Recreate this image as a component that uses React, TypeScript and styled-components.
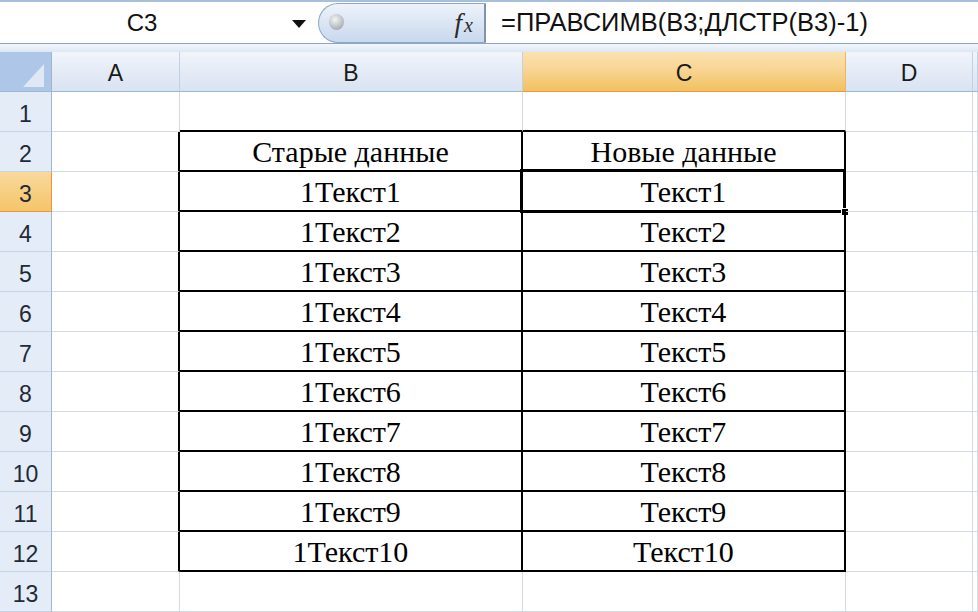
import React from "react";
import styled, { createGlobalStyle } from "styled-components";

const Global = createGlobalStyle`
  html, body { margin: 0; padding: 0; background: #fff; overflow: hidden; }
  #root { width: 978px; height: 612px; }
`;

const Page = styled.div`
  width: 978px;
  height: 612px;
  display: flex;
  flex-direction: column;
  overflow: hidden;
  background: #fff;
`;

const FormulaBar = styled.div`
  height: 45px;
  box-sizing: border-box;
  display: flex;
  align-items: stretch;
  border-top: 2px solid #a9bfdc;
  border-bottom: 1px solid #8ea5c5;
  background: #fff;
`;

const NameBox = styled.div`
  width: 318px;
  display: flex;
  align-items: center;
  flex-shrink: 0;
`;

const NameText = styled.div`
  width: 284px;
  text-align: center;
  font: 24px "Liberation Sans", Arial, sans-serif;
  color: #111;
`;

const DropArrow = styled.div`
  width: 0;
  height: 0;
  margin-left: 8px;
  margin-top: 3px;
  border-left: 7px solid transparent;
  border-right: 7px solid transparent;
  border-top: 8px solid #111;
`;

const Pill = styled.div`
  width: 168px;
  margin: 1px 0 0;
  box-sizing: border-box;
  flex-shrink: 0;
  display: flex;
  align-items: center;
  justify-content: space-between;
  padding: 0 11px 0 10px;
  border: 1px solid #8fa7c8;
  border-right: 2px solid #7f93ae;
  border-radius: 21px 0 0 21px;
  background: linear-gradient(#eef3fa, #d9e4f3 55%, #c9d8ee);
`;

const Knob = styled.div`
  width: 15px;
  height: 16px;
  margin-top: -2px;
  border-radius: 50%;
  background: radial-gradient(circle at 40% 35%, #f4f4f4, #b8bcc2 60%, #8f949b);
`;

const Fx = styled.div`
  font-family: "Liberation Serif", "Times New Roman", serif;
  font-style: italic;
  color: #2a2a2a;
  display: flex;
  align-items: baseline;
  margin-top: 1px;
`;

const FxF = styled.span`
  font-size: 27px;
  padding-right: 2px;
`;

const FxX = styled.span`
  font-size: 20px;
`;

const FormulaText = styled.div`
  flex: 1;
  display: flex;
  align-items: center;
  padding-left: 15px;
  font: 25.5px "Liberation Sans", Arial, sans-serif;
  color: #111;
  white-space: nowrap;
`;

const Spacer = styled.div`
  height: 8px;
  flex-shrink: 0;
  background: linear-gradient(#f3f7fc, #dde7f4);
`;

const Grid = styled.div`
  display: grid;
  grid-template-columns: 52px 128px 343px 323px 127px 1fr;
  grid-auto-rows: 40px;
`;

const Corner = styled.div`
  box-sizing: border-box;
  border-right: 1px solid #9eb6ce;
  border-bottom: 1px solid #9eb6ce;
  background: #aec7e9;
  display: flex;
  align-items: flex-end;
  justify-content: flex-end;
  padding: 0 7px 4px 0;
`;

const ColHeader = styled.div<{ $active?: boolean }>`
  box-sizing: border-box;
  display: flex;
  align-items: center;
  justify-content: center;
  padding-top: 3px;
  font: 23px "Liberation Sans", Arial, sans-serif;
  color: #1a1a1a;
  border-right: 1px solid ${(p) => (p.$active ? "#f2b35a" : "#c1d1e4")};
  border-bottom: 1px solid ${(p) => (p.$active ? "#f29436" : "#9eb6ce")};
  background: ${(p) =>
    p.$active
      ? "linear-gradient(#fbe2b1, #f8d594 45%, #f1c15f)"
      : "linear-gradient(#f1f5fb, #e4ebf6 50%, #d9e3f1)"};
`;

const RowHeader = styled.div<{ $active?: boolean }>`
  box-sizing: border-box;
  display: flex;
  align-items: center;
  justify-content: center;
  padding-top: 5px;
  font: 23px "Liberation Sans", Arial, sans-serif;
  color: #1f2a36;
  border-right: 1px solid ${(p) => (p.$active ? "#f29436" : "#9eb6ce")};
  border-bottom: 1px solid ${(p) => (p.$active ? "#f29436" : "#c5d3e4")};
  background: ${(p) =>
    p.$active ? "linear-gradient(#f9d99c, #f4c56a)" : "#e4ecf7"};
`;

const Cell = styled.div<{ $darkRight?: boolean; $darkBottom?: boolean }>`
  position: relative;
  box-sizing: border-box;
  display: flex;
  align-items: center;
  justify-content: center;
  padding-top: 2px;
  font: 30px "Liberation Serif", "Times New Roman", serif;
  color: #000;
  white-space: nowrap;
  border-right: ${(p) => (p.$darkRight ? "2px solid #000" : "1px solid #d3d9e3")};
  border-bottom: ${(p) => (p.$darkBottom ? "2px solid #000" : "1px solid #d3d9e3")};
`;

const Selection = styled.div`
  position: absolute;
  left: -3px;
  top: -3px;
  right: -2px;
  bottom: -3px;
  border: 3px solid #000;
  pointer-events: none;
`;

const Handle = styled.div`
  position: absolute;
  right: -6px;
  bottom: -6px;
  width: 6px;
  height: 6px;
  background: #000;
  border: 1px solid #fff;
`;

const data = Array.from({ length: 10 }, (_, i) => [`1Текст${i + 1}`, `Текст${i + 1}`]);

type RowSpec = { b: string; c: string; inTable: boolean; aboveTable: boolean };

const rows: RowSpec[] = [
  { b: "", c: "", inTable: false, aboveTable: true },
  { b: "Старые данные", c: "Новые данные", inTable: true, aboveTable: false },
  ...data.map(([b, c]) => ({ b, c, inTable: true, aboveTable: false })),
  { b: "", c: "", inTable: false, aboveTable: false },
];

export default function App() {
  return (
    <Page>
      <Global />
      <FormulaBar>
        <NameBox>
          <NameText>C3</NameText>
          <DropArrow />
        </NameBox>
        <Pill>
          <Knob />
          <Fx>
            <FxF>f</FxF>
            <FxX>x</FxX>
          </Fx>
        </Pill>
        <FormulaText>=ПРАВСИМВ(B3;ДЛСТР(B3)-1)</FormulaText>
      </FormulaBar>
      <Spacer />
      <Grid>
        <Corner>
          <svg width="21" height="23" viewBox="0 0 21 23">
            <polygon points="0,23 21,0 21,23" fill="#dfe8f4" />
          </svg>
        </Corner>
        <ColHeader>A</ColHeader>
        <ColHeader>B</ColHeader>
        <ColHeader $active>C</ColHeader>
        <ColHeader>D</ColHeader>
        <ColHeader />
        {rows.map((r, i) => {
          const n = i + 1;
          const sel = n === 3;
          return (
            <React.Fragment key={n}>
              <RowHeader $active={sel}>{n}</RowHeader>
              <Cell $darkRight={r.inTable} />
              <Cell $darkRight={r.inTable} $darkBottom={r.inTable || r.aboveTable}>
                {r.b}
              </Cell>
              <Cell $darkRight={r.inTable} $darkBottom={r.inTable || r.aboveTable}>
                {r.c}
                {sel && (
                  <Selection>
                    <Handle />
                  </Selection>
                )}
              </Cell>
              <Cell />
              <Cell />
            </React.Fragment>
          );
        })}
      </Grid>
    </Page>
  );
}
